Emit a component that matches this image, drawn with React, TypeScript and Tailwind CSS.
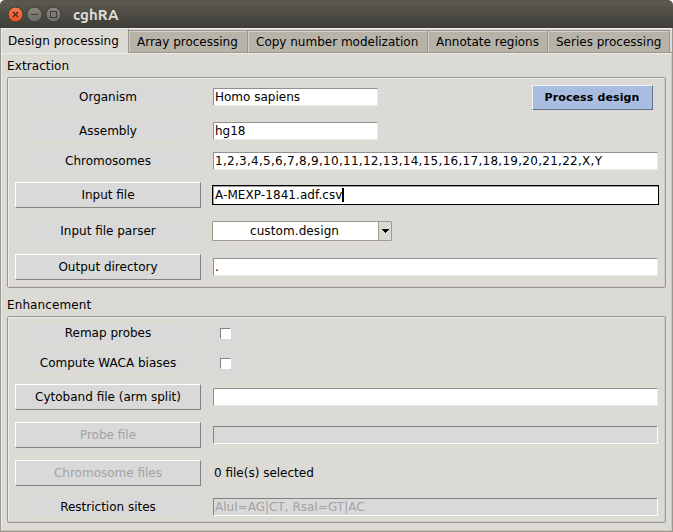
import type { ReactNode } from 'react';

function TitleBar() {
  return (
    <header className="bg-white">
      <div className="flex h-7 items-center rounded-t-[5px] border-t border-[#55534a] bg-gradient-to-b from-[#5c5951] to-[#3e3d38] pl-[7px]">
        <svg width="56" height="18" viewBox="0 0 56 18" fill="none">
          <defs>
            <linearGradient id="close" x1="0" y1="0" x2="0" y2="1">
              <stop offset="0" stopColor="#f37a51" />
              <stop offset="1" stopColor="#e35424" />
            </linearGradient>
            <linearGradient id="grey" x1="0" y1="0" x2="0" y2="1">
              <stop offset="0" stopColor="#8a8880" />
              <stop offset="1" stopColor="#6c6a64" />
            </linearGradient>
          </defs>
          <circle cx="8.5" cy="8.5" r="7.5" fill="url(#close)" stroke="#38352f" />
          <circle cx="27.5" cy="8.5" r="7.5" fill="url(#grey)" stroke="#3a3933" />
          <circle cx="46.5" cy="8.5" r="7.5" fill="url(#grey)" stroke="#3a3933" />
          <path d="M6 6l5 5M11 6l-5 5" stroke="#49291d" strokeWidth="1.2" />
          <path d="M24 8.5h7" stroke="#3c3b37" />
          <rect x="43.5" y="5.5" width="6" height="6" stroke="#3c3b37" />
        </svg>
        <span className="ml-[10px] font-['Ubuntu','Noto_Sans',sans-serif] text-[15px] leading-[20px] font-bold text-[#dfdbd2]">
          cghRA
        </span>
      </div>
    </header>
  );
}

const tabs = [
  { label: 'Array processing', width: 'w-[119px]' },
  { label: 'Copy number modelization', width: 'w-[180px]' },
  { label: 'Annotate regions', width: 'w-[120px]' },
  { label: 'Series processing', width: 'w-[122px]' },
];

function Tabs() {
  return (
    <nav className="flex h-[25px] border-t border-[#eeece6]">
      <div className="flex w-[128px] items-center border-r border-l border-r-[#97948b] border-l-[#eeece6] pb-px pl-[6px] tracking-[0.06px]">
        Design processing
      </div>
      <div className="flex flex-1 border-b border-[#99978f] pt-px">
        {tabs.map((t) => (
          <div
            key={t.label}
            className={`${t.width} flex items-center border-t border-r border-[#97948b] bg-[#b8b3a8] pl-[8px] shadow-[inset_1px_1px_#d4d0c7]`}
          >
            {t.label}
          </div>
        ))}
      </div>
    </nav>
  );
}

function Group({ title, children }: { title: string; children: ReactNode }) {
  return (
    <section>
      <h2 className="flex h-[23px] items-center tracking-[0.1px]">{title}</h2>
      <div className="rounded-[2px] border border-[#99978f] px-[7px] pt-px shadow-[inset_1px_1px_#efede7,inset_-1px_-1px_#cfcdc6]">
        {children}
      </div>
    </section>
  );
}

function Row({ height, label, children }: { height: string; label: ReactNode; children?: ReactNode }) {
  return (
    <div className={`${height} flex items-center`}>
      <div className="flex w-[186px] shrink-0 justify-center">{label}</div>
      <div className="flex flex-1 items-center pl-[11px]">{children}</div>
    </div>
  );
}

function Label({ children }: { children: ReactNode }) {
  return (
    <span className="flex h-[18px] w-[162px] items-center justify-center bg-[#d9d9d9]">{children}</span>
  );
}

function FileButton({ children, disabled }: { children: ReactNode; disabled?: boolean }) {
  return (
    <button
      disabled={disabled}
      className="h-[26px] w-[186px] border border-t-white border-r-[#828282] border-b-[#828282] border-l-white bg-[#d9d9d9] pb-px disabled:text-[#a3a3a3]"
    >
      {children}
    </button>
  );
}

function Field({ value = '', width = 'w-[445px]', disabled }: { value?: string; width?: string; disabled?: boolean }) {
  return (
    <div
      className={`${width} ${
        disabled
          ? 'border-t-[#828282] border-r-white border-b-white border-l-[#828282] bg-[#d9d9d9] text-[#a3a3a3]'
          : 'border-t-[#909090] border-r-[#e8e8e6] border-b-[#e8e8e6] border-l-[#909090] bg-white'
      } ml-px flex h-[18px] items-center border pl-px`}
    >
      {value}
    </div>
  );
}

function Check() {
  return (
    <div className="ml-px flex h-[22px] w-[24px] items-center justify-center bg-[#d9d9d9] pl-px">
      <span className="h-[11px] w-[11px] border border-t-[#828282] border-r-white border-b-white border-l-[#828282] bg-white" />
    </div>
  );
}

export default function App() {
  return (
    <div className="flex h-[532px] w-[673px] flex-col bg-[#dcdad5] font-['DejaVu_Sans',sans-serif] text-[12px] leading-[16px] whitespace-nowrap text-black">
      <TitleBar />
      <div className="flex flex-1 flex-col border-r border-b border-l border-[#99978f]">
        <Tabs />
        <main className="flex flex-1 flex-col gap-[5px] border-t border-r border-b border-l border-t-[#eeece6] border-r-[#c9c7c0] border-b-[#c9c7c0] border-l-[#eeece6] pr-[5px] pl-[5px]">
          <Group title="Extraction">
            <Row height="h-[36px]" label={<Label>Organism</Label>}>
              <Field value="Homo sapiens" width="w-[165px]" />
              <button className="ml-[154px] h-[25px] w-[121px] border border-t-[#eef3fc] border-r-[#65728a] border-b-[#65728a] border-l-[#eef3fc] bg-[#a9bde1] pt-px pr-px text-[11px] font-bold tracking-[0.12px]">
                Process design
              </button>
            </Row>
            <Row height="h-[32px]" label={<Label>Assembly</Label>}>
              <Field value="hg18" width="w-[165px]" />
            </Row>
            <Row height="h-[28px]" label={<Label>Chromosomes</Label>}>
              <div className="flex tracking-[0.28px]">
                <Field value="1,2,3,4,5,6,7,8,9,10,11,12,13,14,15,16,17,18,19,20,21,22,X,Y" />
              </div>
            </Row>
            <Row height="h-[40px]" label={<FileButton>Input file</FileButton>}>
              <div className="flex h-5 w-[447px] items-center border border-black bg-white pl-[2px] tracking-[0.07px] shadow-[inset_1px_1px_#a0a0a0]">
                A-MEXP-1841.adf.csv
                <span className="-ml-px h-[14px] w-[2px] bg-black" />
              </div>
            </Row>
            <Row height="h-[32px]" label={<Label>Input file parser</Label>}>
              <div className="flex h-5 w-[180px] rounded-[1px] border border-[#9e9a8e]">
                <div className="flex flex-1 items-center justify-center bg-white pr-[2px] tracking-[0.1px]">custom.design</div>
                <div className="flex w-[13px] items-center justify-center border-l border-[#9e9a8e]">
                  <svg width="7" height="4" viewBox="0 0 7 4" shapeRendering="crispEdges">
                    <path d="M0 0h7v1h-1v1h-1v1h-1v1h-1v-1h-1v-1h-1v-1h-1z" />
                  </svg>
                </div>
              </div>
            </Row>
            <Row height="h-[40px]" label={<FileButton>Output directory</FileButton>}>
              <Field value="." />
            </Row>
          </Group>
          <Group title="Enhancement">
            <Row height="h-[30px]" label={<Label>Remap probes</Label>}>
              <Check />
            </Row>
            <Row height="h-[30px]" label={<Label>Compute WACA biases</Label>}>
              <Check />
            </Row>
            <Row height="h-[38px]" label={<FileButton>Cytoband file (arm split)</FileButton>}>
              <Field />
            </Row>
            <Row height="h-[38px]" label={<FileButton disabled>Probe file</FileButton>}>
              <Field disabled />
            </Row>
            <Row height="h-[38px]" label={<FileButton disabled>Chromosome files</FileButton>}>
              <span className="pl-[2px]">0 file(s) selected</span>
            </Row>
            <Row height="h-[30px]" label={<Label>Restriction sites</Label>}>
              <Field value="AluI=AG|CT, RsaI=GT|AC" disabled />
            </Row>
          </Group>
        </main>
      </div>
    </div>
  );
}
